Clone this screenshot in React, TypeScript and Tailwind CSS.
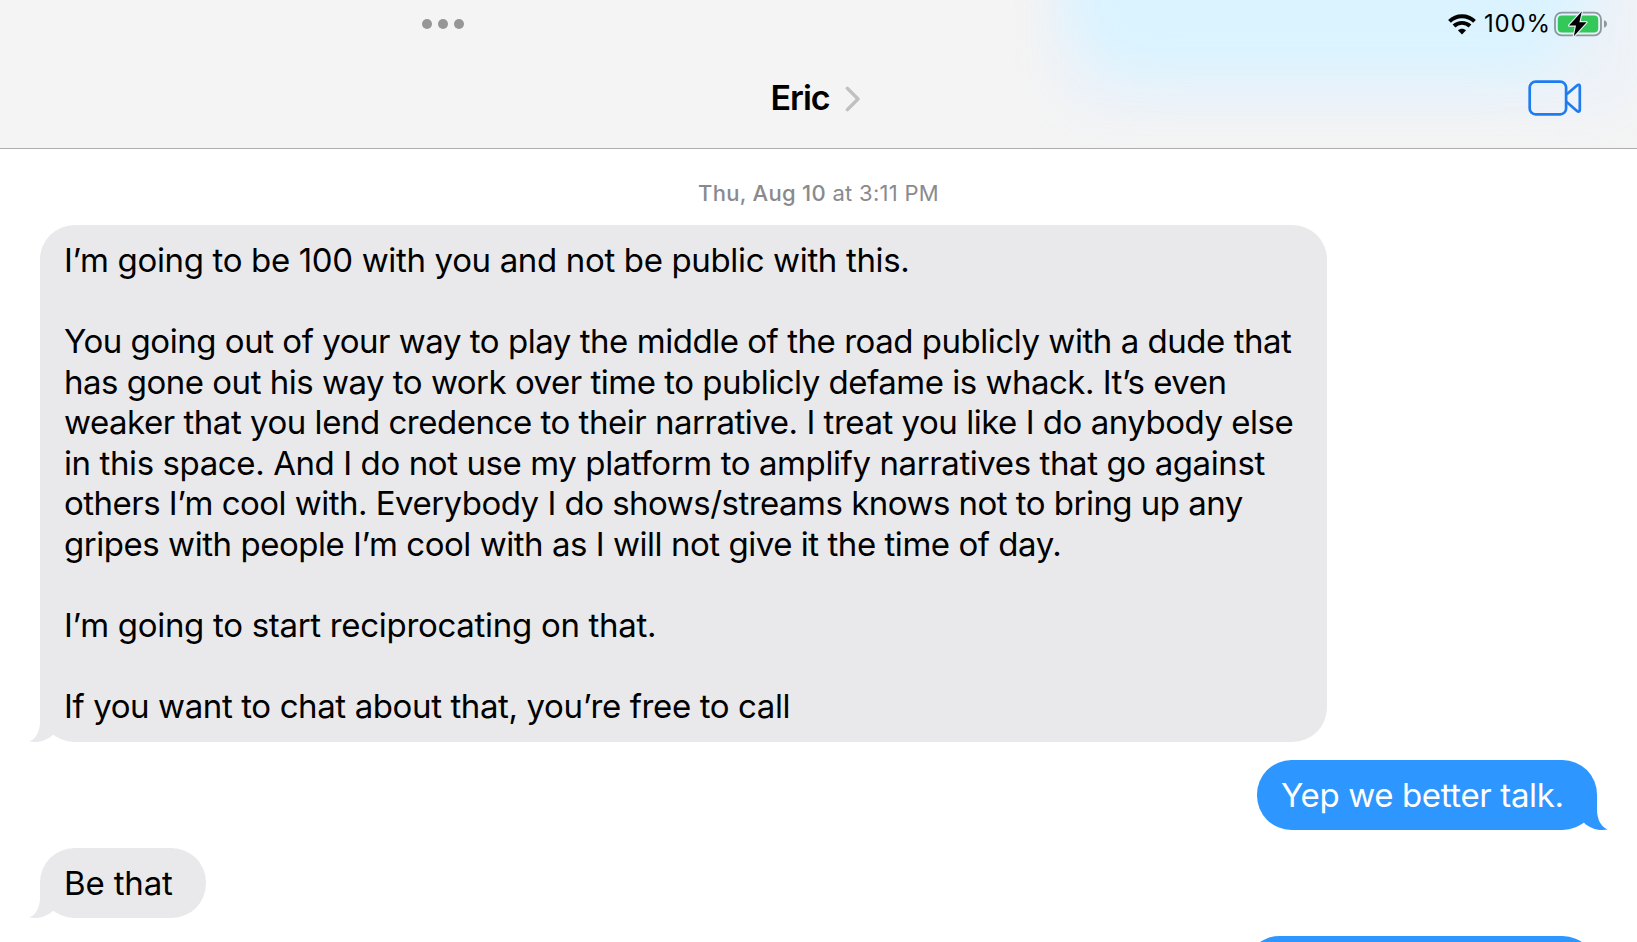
import React from 'react';

interface Line {
  text: string;
  tracking?: string;
}

// Little curved tail at the bottom corner of a bubble
const Tail = ({ side }: { side: 'left' | 'right' }) => (
  <svg
    viewBox="0 0 30 36"
    className={
      side === 'left'
        ? 'absolute bottom-0 -left-[10px] w-[30px] h-[36px] overflow-visible text-[#e9e9eb]'
        : 'absolute bottom-0 -right-[10px] w-[30px] h-[36px] overflow-visible text-[#2d97ff] -scale-x-100'
    }
    fill="currentColor"
  >
    <path d="M10 0 V15 C10 25 6.5 32.5 -0.8 35.6 C9 37.2 17 34.5 23 28.8 L30 15 V0 Z" />
  </svg>
);

interface BubbleProps {
  lines: Line[];
  mine?: boolean;
  className?: string;
}

// Message bubble, grey for received and blue for sent
const Bubble = ({ lines, mine = false, className = '' }: BubbleProps) => (
  <div
    className={`relative rounded-[34.5px] pl-6 pt-[15px] text-[33px] leading-[40.55px] whitespace-pre ${
      mine ? 'self-end bg-[#2d97ff] text-white' : 'self-start bg-[#e9e9eb] text-black'
    } ${className}`}
  >
    {lines.map((line, i) => (
      <p key={i} className={`h-[40.55px] ${line.tracking ?? ''}`}>
        {line.text}
      </p>
    ))}
    <Tail side={mine ? 'right' : 'left'} />
  </div>
);

const WifiIcon = () => (
  <svg viewBox="0 0 28 21" className="w-[28px] h-[21px] shrink-0" fill="none" stroke="#000" strokeWidth="3.9">
    <path d="M1.5 7.4 C8.4 0.5 19.6 0.5 26.5 7.4" />
    <path d="M6 12 C10.4 7.8 17.6 7.8 22 12" />
    <path d="M14 20.6 L9.9 16.3 C12.2 14.2 15.8 14.2 18.1 16.3 Z" fill="#000" stroke="none" />
  </svg>
);

const BatteryIcon = () => (
  <svg viewBox="0 0 54 26" className="w-[54px] h-[26px] shrink-0 overflow-visible">
    <rect x="1" y="1.7" width="46" height="22.6" rx="6.5" fill="none" stroke="#8d979d" strokeWidth="1.8" />
    <rect x="3.8" y="4.5" width="40.4" height="17" rx="4" fill="#34c759" />
    <path d="M50 9.3 C54 10.5 54 15.5 50 16.7 Z" fill="#8d979d" />
    <path
      d="M27.8 0.6 L15 14.6 H22 L19.8 25.2 L32.6 11.2 H25.4 Z"
      fill="#000"
      stroke="#e6f4fb"
      strokeWidth="2.2"
      strokeLinejoin="round"
      paintOrder="stroke"
    />
  </svg>
);

const VideoIcon = () => (
  <svg viewBox="0 0 54 36" className="w-[54px] h-[36px]" fill="none" stroke="#1f7cf0" strokeWidth="2.7" strokeLinejoin="round">
    <rect x="1.7" y="1.6" width="36.4" height="32.8" rx="6" />
    <path d="M38.4 14.6 L49 5.5 C50.6 4.2 51.8 4.8 51.8 6.4 V30 C51.8 31.6 50.6 32.2 49 30.9 L38.4 21.8" />
  </svg>
);

const Header = () => (
  <header className="relative h-[149px] shrink-0 bg-[#f4f4f4] border-b border-[#adadb1]">
    {/* Blue message showing through the translucent bar */}
    <div className="absolute inset-0 overflow-hidden">
      <div className="absolute -top-[120px] -right-[10px] w-[600px] h-[240px] rounded-[60px] bg-[#edf2f8] blur-[20px]" />
      <div className="absolute -top-[160px] right-[50px] w-[520px] h-[238px] rounded-[80px] bg-[#daf3ff] blur-[22px]" />
    </div>
    <div className="relative h-12 flex items-center justify-between pl-[422px] pr-[29px]">
      <div className="flex gap-[6px]">
        <span className="size-[10px] rounded-full bg-[#969696]" />
        <span className="size-[10px] rounded-full bg-[#969696]" />
        <span className="size-[10px] rounded-full bg-[#969696]" />
      </div>
      <div className="flex items-center">
        <WifiIcon />
        <span className="w-[78px] pl-2 text-[24px] tracking-[0.8px] whitespace-nowrap">100%</span>
        <BatteryIcon />
      </div>
    </div>
    <div className="relative h-[100px] flex items-start pl-[770.5px] pr-[55px]">
      <h1 className="pt-[30px] text-[34px] leading-[40px] font-semibold tracking-[-1px]">Eric</h1>
      <svg viewBox="0 0 16 26" className="mt-[38px] ml-[15px] w-[16px] h-[26px]" fill="none" stroke="#c0c0c2" strokeWidth="3.4" strokeLinecap="round" strokeLinejoin="round">
        <path d="M2.4 2.4 L13 13 L2.4 23.6" />
      </svg>
      <div className="ml-auto mt-8">
        <VideoIcon />
      </div>
    </div>
  </header>
);

const longMessage: Line[] = [
  { text: 'I’m going to be 100 with you and not be public with this.', tracking: 'tracking-[-0.345px]' },
  { text: '' },
  { text: 'You going out of your way to play the middle of the road publicly with a dude that', tracking: 'tracking-[-0.465px]' },
  { text: 'has gone out his way to work over time to publicly defame is whack. It’s even', tracking: 'tracking-[-0.495px]' },
  { text: 'weaker that you lend credence to their narrative. I treat you like I do anybody else', tracking: 'tracking-[-0.475px]' },
  { text: 'in this space. And I do not use my platform to amplify narratives that go against', tracking: 'tracking-[-0.4px]' },
  { text: 'others I’m cool with. Everybody I do shows/streams knows not to bring up any', tracking: 'tracking-[-0.52px]' },
  { text: 'gripes with people I’m cool with as I will not give it the time of day.', tracking: 'tracking-[-0.46px]' },
  { text: '' },
  { text: 'I’m going to start reciprocating on that.', tracking: 'tracking-[-0.3px]' },
  { text: '' },
  { text: 'If you want to chat about that, you’re free to call', tracking: 'tracking-[-0.39px]' },
];

export default function App() {
  return (
    <div className="w-[1637px] h-[942px] overflow-hidden flex flex-col bg-white text-black font-['Inter',sans-serif]">
      <Header />
      <main className="flex flex-col px-10">
        <p className="h-[76px] pt-[29px] text-center text-[22px] leading-[30px] tracking-[0.28px] text-[#8a8a8e]">
          <span className="font-medium">Thu, Aug 10</span> at 3:11 PM
        </p>
        <Bubble lines={longMessage} className="w-[1287px] h-[517px]" />
        <Bubble
          mine
          lines={[{ text: 'Yep we better talk.', tracking: 'tracking-[-0.36px]' }]}
          className="mt-[18px] w-[340px] h-[70px]"
        />
        <Bubble
          lines={[{ text: 'Be that', tracking: 'tracking-[-0.15px]' }]}
          className="mt-[18px] w-[166px] h-[70px]"
        />
        <Bubble mine lines={[]} className="mt-[18px] w-[352px] h-[70px]" />
      </main>
    </div>
  );
}
